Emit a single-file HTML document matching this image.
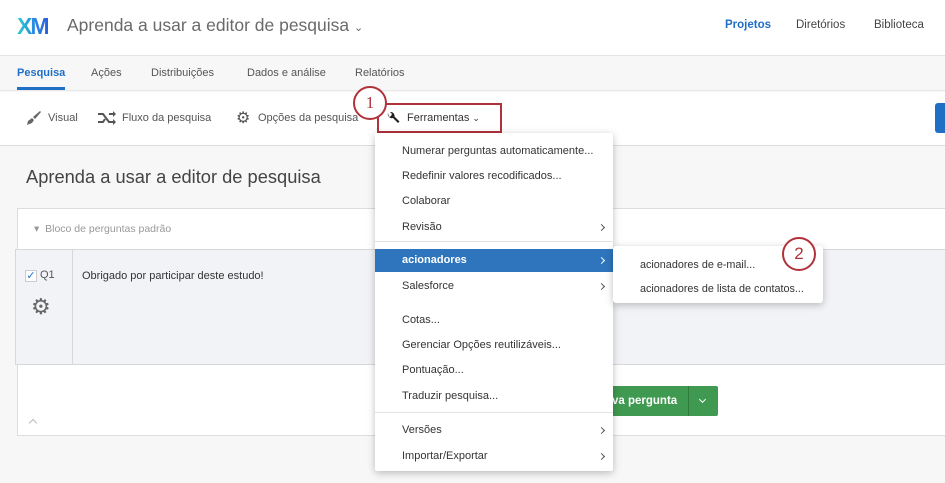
<!DOCTYPE html>
<html><head><meta charset="utf-8"><style>
*{margin:0;padding:0;box-sizing:border-box}
body{width:945px;height:483px;overflow:hidden;background:#f7f7f7;font-family:"Liberation Sans",sans-serif;position:relative;color:#333}
.a{position:absolute}
.t{white-space:nowrap}
.ch{position:absolute;left:224px;width:5px;height:5px;border-top:1px solid #555;border-right:1px solid #555;transform:rotate(45deg)}
</style></head><body>
<div class="a" style="left:0;top:0;width:945px;height:56px;background:#fff;border-bottom:1px solid #e4e4e4"></div>
<div class="a t" style="left:17px;top:13px;font-size:23px;font-weight:bold;letter-spacing:-2px;background:linear-gradient(90deg,#2fd1c6,#2a8fe0,#2a5ee0);-webkit-background-clip:text;color:transparent">XM</div>
<div class="a t" style="left:67px;top:15px;font-size:17.5px;color:#6a6a6a">Aprenda a usar a editor de pesquisa <span style="font-size:11px">⌄</span></div>
<div class="a t" style="left:725px;top:19px;font-size:11.5px;color:#1f6fc5;font-weight:bold">Projetos</div>
<div class="a t" style="left:796px;top:19px;font-size:11.5px;color:#444">Diretórios</div>
<div class="a t" style="left:874px;top:19px;font-size:11.5px;color:#444">Biblioteca</div>
<div class="a" style="left:0;top:57px;width:945px;height:34px;background:#f7f7f7;border-bottom:1px solid #e8e8e8"></div>
<div class="a t" style="left:17px;top:67px;font-size:11px;color:#1f6fc5;font-weight:bold">Pesquisa</div>
<div class="a" style="left:17px;top:87px;width:48px;height:3px;background:#1f6fc5"></div>
<div class="a t" style="left:91px;top:67px;font-size:11px;color:#555">Ações</div>
<div class="a t" style="left:151px;top:67px;font-size:11px;color:#555">Distribuições</div>
<div class="a t" style="left:247px;top:67px;font-size:11px;color:#555">Dados e análise</div>
<div class="a t" style="left:355px;top:67px;font-size:11px;color:#555">Relatórios</div>
<div class="a" style="left:0;top:92px;width:945px;height:54px;background:#fff;border-bottom:1px solid #ddd"></div>
<svg class="a" style="left:25px;top:110px" width="16" height="16" viewBox="0 0 16 16"><path d="M15 1L8 7l2 2 6-7z M7 8l2 2-2 3-5 2 1-4z" fill="#666"/></svg>
<div class="a t" style="left:48px;top:112px;font-size:11px;color:#555">Visual</div>
<svg class="a" style="left:97px;top:111px" width="20" height="14" viewBox="0 0 20 14"><path d="M1 3h5l6 8h6M1 11h5l2-3M12 3h6" stroke="#555" stroke-width="2" fill="none"/><path d="M16 0l3 3-3 3zM16 8l3 3-3 3z" fill="#555"/></svg>
<div class="a t" style="left:122px;top:112px;font-size:11px;color:#555">Fluxo da pesquisa</div>
<div class="a t" style="left:236px;top:108px;font-size:16px;color:#555">⚙</div>
<div class="a t" style="left:258px;top:112px;font-size:11px;color:#555">Opções da pesquisa</div>
<div class="a" style="left:377px;top:103px;width:125px;height:30px;border:2px solid #b0323a;background:#fff"></div>
<svg class="a" style="left:386px;top:111px" width="14" height="14" viewBox="0 0 14 14"><path d="M2 2a4 4 0 0 0 5 5l5 5 1.5-1.5-5-5A4 4 0 0 0 4 1L6 3 5 5 3 6z" fill="#222"/></svg>
<div class="a t" style="left:407px;top:112px;font-size:11px;color:#333">Ferramentas <span style="font-size:9px">⌄</span></div>
<div class="a" style="left:935px;top:103px;width:10px;height:30px;background:#1f6fc5;border-radius:3px 0 0 3px"></div>
<div class="a" style="left:353px;top:86px;width:34px;height:34px;border:2px solid #b0323a;border-radius:50%;background:#fff;text-align:center;font-size:17px;line-height:30px;color:#b0323a;font-family:'Liberation Serif',serif">1</div>
<div class="a t" style="left:26px;top:166px;font-size:18.3px;color:#444">Aprenda a usar a editor de pesquisa</div>
<div class="a" style="left:17px;top:208px;width:935px;height:228px;background:#fff;border:1px solid #ddd"></div>
<div class="a t" style="left:34px;top:223px;font-size:10.5px;color:#999">▾ &nbsp;Bloco de perguntas padrão</div>
<div class="a" style="left:15px;top:249px;width:935px;height:116px;background:#f2f3f7;border:1px solid #d8d8d8"></div>
<div class="a" style="left:72px;top:249px;width:1px;height:116px;background:#d8d8d8"></div>
<div class="a" style="left:25px;top:270px;width:12px;height:12px;background:#fff;border:1px solid #ccc;color:#1f6fc5;font-size:11px;line-height:10px;text-align:center">✓</div>
<div class="a t" style="left:40px;top:269px;font-size:11px;color:#555">Q1</div>
<div class="a t" style="left:31px;top:294px;font-size:22px;color:#666">⚙</div>
<div class="a t" style="left:82px;top:270px;font-size:11px;color:#333">Obrigado por participar deste estudo!</div>
<div class="a" style="left:30px;top:420px;width:6px;height:6px;border-top:1px solid #bbb;border-left:1px solid #bbb;transform:rotate(45deg)"></div>
<div class="a" style="left:590px;top:386px;width:128px;height:30px;background:#3f9950;border-radius:2px"></div>
<div class="a" style="left:688px;top:386px;width:1px;height:30px;background:#2d7a3d"></div>
<div class="a t" style="left:612px;top:395px;font-size:11.5px;color:#fff;font-weight:bold">va pergunta</div>
<div class="a" style="left:700px;top:397px;width:5px;height:5px;border-right:1px solid #fff;border-bottom:1px solid #fff;transform:rotate(45deg)"></div>
<div class="a" style="left:375px;top:133px;width:238px;height:338px;background:#fff;box-shadow:0 2px 8px rgba(0,0,0,.25);border-radius:2px;font-size:11px;color:#333">
<div class="a t" style="left:27px;top:12px">Numerar perguntas automaticamente...</div>
<div class="a t" style="left:27px;top:37px">Redefinir valores recodificados...</div>
<div class="a t" style="left:27px;top:62px">Colaborar</div>
<div class="a t" style="left:27px;top:88px">Revisão</div><div class="ch" style="top:92px"></div>
<div class="a" style="left:0;top:108px;width:238px;height:1px;background:#e2e2e2"></div>
<div class="a" style="left:0;top:116px;width:238px;height:23px;background:#2e75bd"></div>
<div class="a t" style="left:27px;top:121px;color:#fff;font-weight:bold">acionadores</div><div class="ch" style="top:125px;border-color:#fff"></div>
<div class="a t" style="left:27px;top:147px">Salesforce</div><div class="ch" style="top:151px"></div>
<div class="a t" style="left:27px;top:181px">Cotas...</div>
<div class="a t" style="left:27px;top:206px">Gerenciar Opções reutilizáveis...</div>
<div class="a t" style="left:27px;top:231px">Pontuação...</div>
<div class="a t" style="left:27px;top:257px">Traduzir pesquisa...</div>
<div class="a" style="left:0;top:279px;width:238px;height:1px;background:#e2e2e2"></div>
<div class="a t" style="left:27px;top:291px">Versões</div><div class="ch" style="top:295px"></div>
<div class="a t" style="left:27px;top:317px">Importar/Exportar</div><div class="ch" style="top:321px"></div>
</div>
<div class="a" style="left:613px;top:246px;width:210px;height:57px;background:#fff;box-shadow:0 2px 8px rgba(0,0,0,.25);border-radius:3px;font-size:10.8px;color:#333">
<div class="a t" style="left:27px;top:13px">acionadores de e-mail...</div>
<div class="a t" style="left:27px;top:37px">acionadores de lista de contatos...</div>
</div>
<div class="a" style="left:782px;top:237px;width:34px;height:34px;border:2px solid #b0323a;border-radius:50%;background:#fff;text-align:center;font-size:17px;line-height:30px;color:#b0323a">2</div>
</body></html>
